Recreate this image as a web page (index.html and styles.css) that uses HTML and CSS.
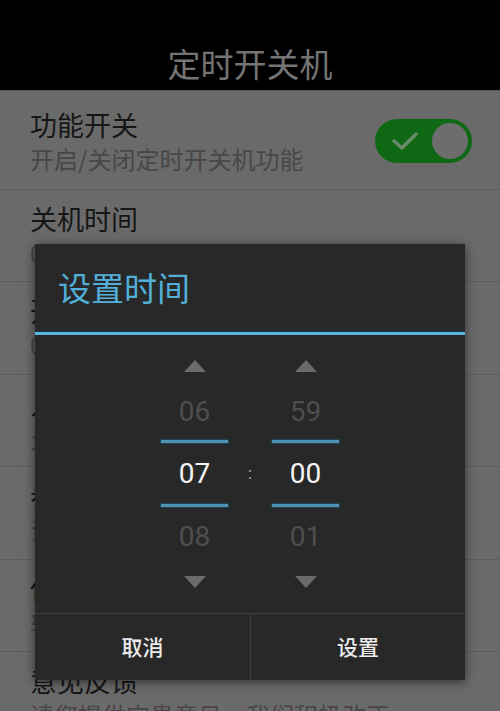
FILE: index.html
```html
<!DOCTYPE html>
<html lang="zh-CN">
<head>
<meta charset="utf-8">
<title>定时开关机</title>
<link rel="stylesheet" href="styles.css">
</head>
<body>
<div class="screen">
  <header class="appbar"><h1 class="appbar-title">定时开关机</h1></header>
  <ul class="list">
    <li class="row row-first">
      <div class="texts">
        <div class="title">功能开关</div>
        <div class="sub">开启/关闭定时开关机功能</div>
      </div>
      <div class="toggle">
        <svg class="check" width="28" height="22" viewBox="0 0 28 22"><path d="M3 11 L11 18 L25 4" fill="none" stroke="#6a8a6a" stroke-width="3.5" stroke-linecap="round" stroke-linejoin="round"/></svg>
        <span class="knob"></span>
      </div>
    </li>
    <li class="row"><div class="texts"><div class="title">关机时间</div><div class="sub">01:00</div></div></li>
    <li class="row"><div class="texts"><div class="title">开机时间</div><div class="sub">07:00</div></div></li>
    <li class="row"><div class="texts"><div class="title">人性化提醒</div><div class="sub">允许关机前提醒</div></div></li>
    <li class="row"><div class="texts"><div class="title">参数设置</div><div class="sub">设置相关参数</div></div></li>
    <li class="row"><div class="texts"><div class="title">使用帮助</div><div class="sub">软件使用说明</div></div></li>
    <li class="row"><div class="texts"><div class="title">意见反馈</div><div class="sub">请您提供宝贵意见，我们积极改正</div></div></li>
  </ul>

  <div class="dialog">
    <div class="dlg-title">设置时间</div>
    <div class="dlg-rule"></div>
    <div class="picker">
      <div class="col">
        <div class="arrow-cell"><span class="tri tri-up"></span></div>
        <div class="val val-top">06</div>
        <div class="sel-line"></div>
        <div class="val val-sel">07</div>
        <div class="sel-line"></div>
        <div class="val val-bot">08</div>
        <div class="arrow-cell arrow-down"><span class="tri tri-down"></span></div>
      </div>
      <div class="colon">:</div>
      <div class="col">
        <div class="arrow-cell"><span class="tri tri-up"></span></div>
        <div class="val val-top">59</div>
        <div class="sel-line"></div>
        <div class="val val-sel">00</div>
        <div class="sel-line"></div>
        <div class="val val-bot">01</div>
        <div class="arrow-cell arrow-down"><span class="tri tri-down"></span></div>
      </div>
    </div>
    <div class="actions">
      <button class="btn">取消</button>
      <button class="btn btn-right">设置</button>
    </div>
  </div>
</div>
</body>
</html>
```

FILE: styles.css
```css
* { box-sizing: border-box; }
html, body { margin: 0; padding: 0; }
body {
  width: 500px;
  height: 711px;
  overflow: hidden;
  background: #6a6a6a;
  font-family: "Noto Sans CJK SC", "Noto Sans", sans-serif;
}
.screen {
  position: relative;
  width: 500px;
  height: 711px;
  overflow: hidden;
  background: #6a6a6a;
}
.appbar {
  height: 91px;
  background: #000;
  display: flex;
  justify-content: center;
  padding-top: 42px;
  border-bottom: 1px solid #5a5a5a;
}
.appbar-title {
  margin: 0;
  font-size: 33px;
  font-weight: 400;
  line-height: 42px;
  color: #747474;
}
.list {
  list-style: none;
  margin: 0;
  padding: 0;
}
.row {
  height: 92.4px;
  padding: 12px 28px 0 30px;
  border-bottom: 1px solid #5d5d5d;
  display: flex;
  align-items: flex-start;
  justify-content: space-between;
}
.row-first {
  height: 99px;
  padding-top: 17px;
  align-items: center;
  padding-bottom: 15px;
}
.title {
  font-size: 27px;
  line-height: 34px;
  color: #161616;
  white-space: nowrap;
}
.sub {
  margin-top: 2px;
  font-size: 24px;
  line-height: 30px;
  color: #474747;
  white-space: nowrap;
}
.toggle {
  width: 97px;
  height: 44px;
  border-radius: 22px;
  background: #0f6814;
  display: flex;
  align-items: center;
  justify-content: space-between;
  padding: 0 4px 0 16px;
}
.check { display: block; }
.knob {
  width: 36px;
  height: 36px;
  border-radius: 50%;
  background: #6d6d6d;
}

/* dialog */
.dialog {
  position: absolute;
  left: 35px;
  top: 244px;
  width: 430px;
  height: 436px;
  background: #282828;
  box-shadow: 0 2px 10px rgba(0, 0, 0, 0.55);
  display: flex;
  flex-direction: column;
}
.dlg-title {
  height: 88px;
  display: flex;
  align-items: center;
  padding-left: 23px;
  padding-bottom: 2px;
  font-size: 33px;
  color: #52afd8;
  border-bottom: 1px solid #1f3b47;
}
.dlg-rule {
  height: 3px;
  background: #5ab4de;
}
.picker {
  height: 278px;
  display: flex;
  justify-content: center;
  align-items: flex-start;
  font-family: Roboto, "Noto Sans", sans-serif;
}
.col {
  width: 67px;
  display: flex;
  flex-direction: column;
  align-items: stretch;
  padding-top: 14px;
}
.arrow-cell {
  height: 34px;
  display: flex;
  align-items: center;
  justify-content: center;
}
.arrow-down { height: 32px; }
.tri {
  width: 0;
  height: 0;
  border-left: 11px solid transparent;
  border-right: 11px solid transparent;
}
.tri-up { border-bottom: 12px solid #6b6b6b; }
.tri-down { border-top: 12px solid #6b6b6b; }
.val {
  text-align: center;
  font-size: 28px;
  color: #4e4e4e;
}
.val-top { height: 57px; line-height: 57px; }
.val-sel { height: 61px; line-height: 61px; color: #f4f4f4; }
.val-bot { height: 59px; line-height: 59px; }
.sel-line {
  height: 3px;
  background: #4f93b3;
  box-shadow: 0 0 1px 1px rgba(30, 70, 88, 0.8);
}
.colon {
  width: 44px;
  margin-top: 108px;
  height: 61px;
  line-height: 61px;
  text-align: center;
  font-size: 17px;
  color: #bdbdbd;
}
.actions {
  height: 67px;
  border-top: 1px solid #3e3e3e;
  display: grid;
  grid-template-columns: 1fr 1fr;
}
.btn {
  margin: 0;
  padding: 0 0 2px 0;
  border: 0;
  background: transparent;
  font-family: "Noto Sans CJK SC", "Noto Sans", sans-serif;
  font-size: 21px;
  font-weight: 500;
  color: #ececec;
}
.btn-right { border-left: 1px solid #3e3e3e; }
```
